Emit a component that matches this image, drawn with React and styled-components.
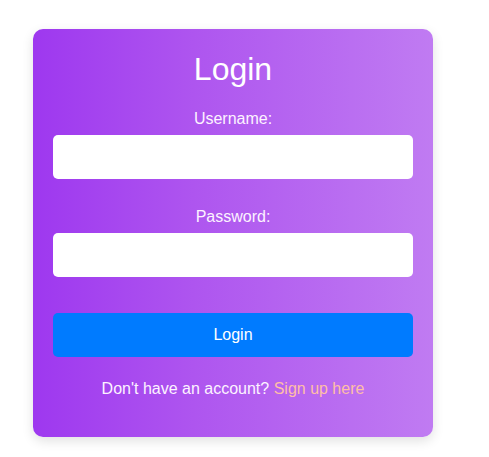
import React from 'react';
import styled, { createGlobalStyle } from 'styled-components';

const GlobalStyle = createGlobalStyle`
	* {
		box-sizing: border-box;
	}

	body {
		margin: 0;
		background: #fff;
		font-family: 'Liberation Sans', Arial, sans-serif;
	}
`;

const App = () => {
	return (
		<Page>
			<GlobalStyle />
			<Card onSubmit={(e) => e.preventDefault()}>
				<Title>Login</Title>
				<Field>
					<Label htmlFor="username">Username:</Label>
					<Input id="username" type="text" />
				</Field>
				<Field $spaced>
					<Label htmlFor="password">Password:</Label>
					<Input id="password" type="password" />
				</Field>
				<SubmitButton type="submit">Login</SubmitButton>
				<Footer>
					Don't have an account? <SignUpLink href="#">Sign up here</SignUpLink>
				</Footer>
			</Card>
		</Page>
	);
};

export default App;

const Page = styled.div`
	display: flex;
	justify-content: flex-start;
	align-items: flex-start;

	padding: 29px 0 0 33px;
	min-height: 457px;
`;

const Card = styled.form`
	display: flex;
	flex-flow: column nowrap;
	align-items: stretch;

	width: 400px;
	height: 408px;
	padding: 22px 20px 20px;

	border-radius: 10px;
	background: linear-gradient(to right, #9e38ef 0%, #ae55ef 40%, #c07bf2 100%);
	box-shadow: 0 4px 12px rgba(0, 0, 0, 0.12);

	color: #fff;
`;

const Title = styled.h2`
	margin: 0 0 22px;

	font-size: 32px;
	font-weight: normal;
	line-height: 37px;
	text-align: center;
`;

const Field = styled.div`
	display: flex;
	flex-flow: column nowrap;
	gap: 7px;

	margin-top: ${({ $spaced }) => ($spaced ? '29px' : '0')};
`;

const Label = styled.label`
	font-size: 16px;
	line-height: 18px;
	text-align: center;
	color: #fdf3ff;
`;

const Input = styled.input`
	width: 100%;
	height: 44px;
	padding: 0 12px;

	border: none;
	border-radius: 5px;
	background: #fff;

	font-family: inherit;
	font-size: 16px;
	outline: none;
`;

const SubmitButton = styled.button`
	width: 100%;
	height: 44px;
	margin-top: 36px;

	border: none;
	border-radius: 5px;
	background: #007bff;

	color: #fff;
	font-family: inherit;
	font-size: 16px;
	cursor: pointer;
`;

const Footer = styled.p`
	margin: 23px 0 0;

	font-size: 16px;
	line-height: 18px;
	text-align: center;
	color: #fdf3ff;
`;

const SignUpLink = styled.a`
	color: #ffbfa6;
	text-decoration: none;
`;
